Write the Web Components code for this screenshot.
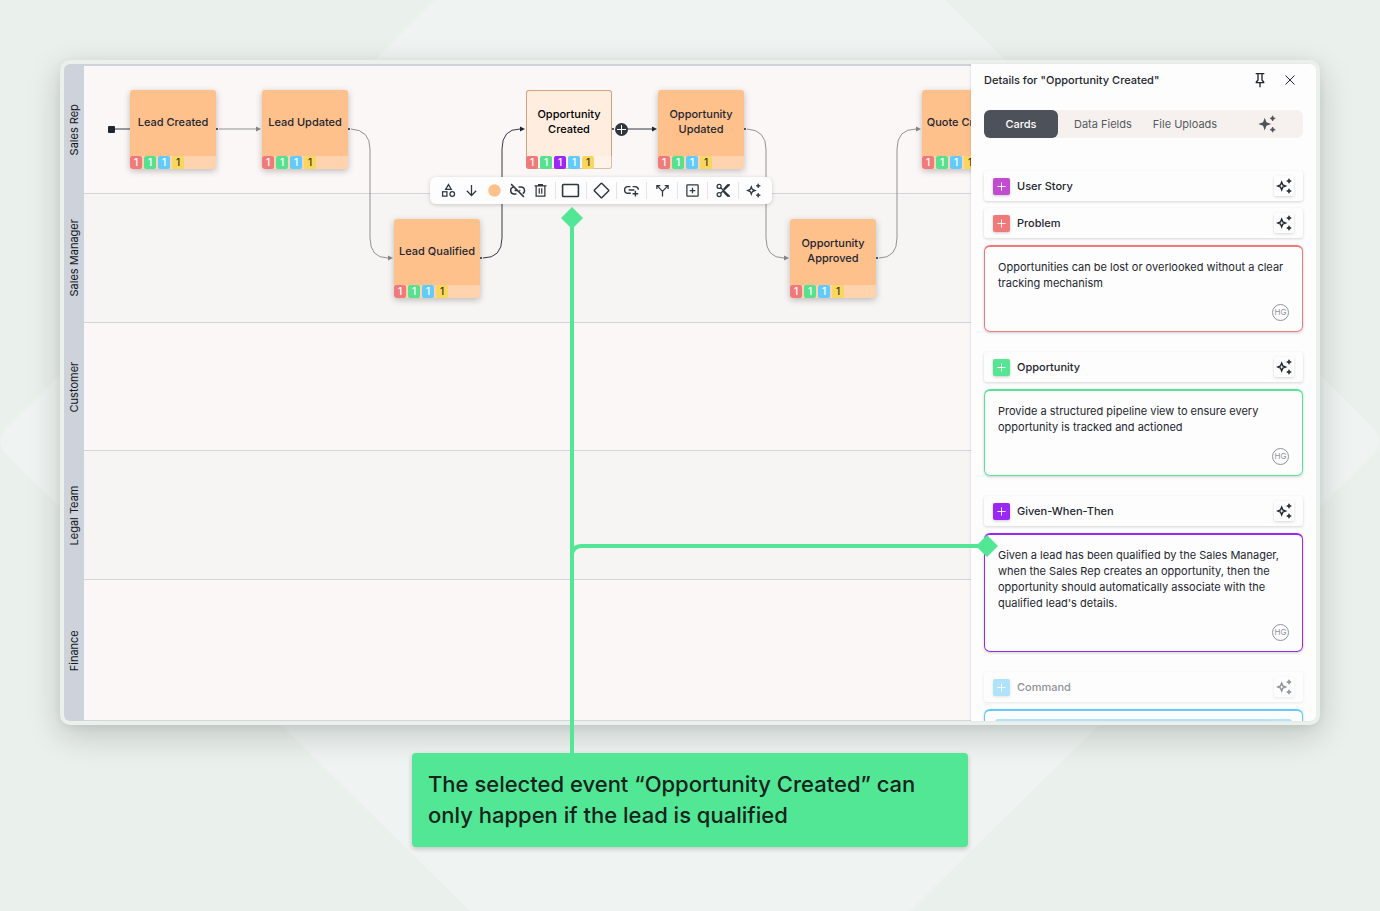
<!DOCTYPE html>
<html lang="en">
<head>
<meta charset="utf-8">
<meta name="viewport" content="width=device-width, initial-scale=1">
<title>Process map</title>
<style>
  body {
    margin: 0;
    font-family: Inter, "Liberation Sans", sans-serif;
    color: #1e2630;
  }
</style>
</head>
<body>
<map-stage>
  <process-board slot="board">
    <swim-lane name="Sales Rep"></swim-lane>
    <swim-lane name="Sales Manager" alt></swim-lane>
    <swim-lane name="Customer"></swim-lane>
    <swim-lane name="Legal Team" alt></swim-lane>
    <swim-lane name="Finance"></swim-lane>

    <flow-links slot="canvas"></flow-links>
    <event-node slot="canvas" col="0" row="0">Lead Created</event-node>
    <event-node slot="canvas" col="1" row="0">Lead Updated</event-node>
    <event-node slot="canvas" col="2" row="1">Lead Qualified</event-node>
    <event-node slot="canvas" col="3" row="0" selected>Opportunity Created</event-node>
    <event-node slot="canvas" col="4" row="0">Opportunity Updated</event-node>
    <event-node slot="canvas" col="5" row="1">Opportunity Approved</event-node>
    <event-node slot="canvas" col="6" row="0">Quote Created</event-node>
    <node-toolbar slot="canvas"></node-toolbar>

    <details-panel slot="panel" heading='Details for "Opportunity Created"'>
      <card-group name="User Story" color="#c24ccf"></card-group>
      <card-group name="Problem" color="#f07a7a">
        <note-card color="#f07a7a" author="HG">Opportunities can be lost or overlooked without a clear tracking mechanism</note-card>
      </card-group>
      <card-group name="Opportunity" color="#56e592">
        <note-card color="#56e592" author="HG">Provide a structured pipeline view to ensure every opportunity is tracked and actioned</note-card>
      </card-group>
      <card-group name="Given-When-Then" color="#9a27f3">
        <note-card color="#9a27f3" author="HG">Given a lead has been qualified by the Sales Manager, when the Sales Rep creates an opportunity, then the opportunity should automatically associate with the qualified lead's details.</note-card>
      </card-group>
      <card-group name="Command" color="#62cbfb" muted>
        <note-card color="#62cbfb" draft></note-card>
      </card-group>
    </details-panel>
  </process-board>
  <call-out slot="callout">The selected event “Opportunity Created” can only happen if the lead is qualified</call-out>
</map-stage>

<script>
const SPARKS = `
  <path d="M19.500 1l1 2.500 2.500 1-2.500 1-1 2.500-1-2.500-2.500-1 2.500-1z
    M19.500 16l1 2.500 2.500 1-2.500 1-1 2.500-1-2.500-2.500-1 2.500-1z" fill="currentColor" stroke-width="1"/>`;

const ICONS = {
  shapes: `<path d="M12 2.500l4.500 7.500h-9z"/><rect x="2.500" y="14" width="7" height="7"/><circle cx="18" cy="17.500" r="3.700"/>`,
  down: `<path d="M12 3v17M4.500 12.500L12 20l7.500-7.500"/>`,
  dot: `<circle cx="12" cy="12" r="10" fill="#ffc18c" stroke="none"/>`,
  unlink: `<path d="M6 7.200a5 5 0 0 0 1 9.800h3.500M13.500 7H17a5 5 0 0 1 2.500 9.300M8 12h4M14.500 12H16M3 3l18 18"/>`,
  trash: `<path d="M2.500 4.500h19M9 4.500V2.500h6v2M5 4.500V21h14V4.500M10 8.500v8.500M14 8.500v8.500"/>`,
  rect: `<rect x="2" y="4.500" width="20" height="15" rx="1"/>`,
  diamond: `<rect x="4.500" y="4.500" width="15" height="15" rx="1" transform="rotate(45 12 12)"/>`,
  linkadd: `<path d="M10.500 6.500H7a4.700 4.700 0 0 0 0 9.400h4M13.500 6.500H17a4.700 4.700 0 0 1 4.700 4.500M8 11.200h8M17.500 12.500v8M13.500 16.500h8"/>`,
  fork: `<path d="M12 21.500v-8L4 5M12 13.500L20 5M3 9.500V4h5.500M15.500 4H21v5.500"/>`,
  boxadd: `<rect x="3" y="3" width="18" height="18" rx="1"/><path d="M12 7.500v9M7.500 12h9"/>`,
  cut: `<circle cx="5" cy="5.500" r="3.200"/><circle cx="5" cy="18.500" r="3.200"/>
    <path d="M7.500 7.500L22 21.500M7.500 16.500L22 2.500"/><path d="M12 12l9.500 9.500h-3.500L11 14zM14 10.500l7.500-8H18L12 9z" fill="currentColor" stroke-width="1"/>`,
  sparkle: `<path d="M8.500 6l1.700 4.300 4.300 1.700-4.300 1.700L8.500 18l-1.700-4.300L2.500 12l4.300-1.700z"/>${SPARKS}`,
  sparkleFill: `<path d="M9 3.500l2.200 6.300 6.300 2.200-6.300 2.200L9 20.500l-2.200-6.300L.5 12l6.300-2.200z" fill="currentColor" stroke="none"/>${SPARKS}`,
  plus: `<path d="M12 3v18M3 12h18"/>`,
  pin: `<path d="M5.500 2.500h13M9 2.500V12l-2.500 3v1h11v-1L15 12V2.500M12 16v7"/>`,
  close: `<path d="M3 3l18 18M21 3L3 21"/>`
};

const icon = (name, size, stroke = 2) => `
  <svg width="${size}" height="${size}" viewBox="0 0 24 24" fill="none" stroke="currentColor"
    stroke-width="${stroke}" aria-hidden="true">${ICONS[name]}</svg>`;

const BUTTON_RESET = `
  button {
    margin: 0;
    padding: 0;
    border: none;
    background: none;
    color: inherit;
    font: inherit;
    cursor: pointer;
    display: flex;
    align-items: center;
    justify-content: center;
  }
  svg { display: block; }
`;

class MapStage extends HTMLElement {
  constructor() {
    super();
    this.attachShadow({ mode: "open" });
  }

  connectedCallback() {
    this.shadowRoot.innerHTML = /* html */`
      <style>
        :host {
          position: relative;
          box-sizing: border-box;
          height: 100vh;
          min-height: 600px;
          padding: 60px 60px 64px;
          display: flex;
          flex-direction: column;
          align-items: center;
          gap: 28px;
          overflow: hidden;
          background: #eaf0ec;
        }
        .backdrop, .pointer {
          position: absolute;
          top: 0;
          left: 0;
          width: 100%;
          height: 100%;
          pointer-events: none;
        }
        ::slotted(process-board) {
          position: relative;
          flex: 1 1 0;
          min-height: 0;
          align-self: stretch;
        }
        ::slotted(call-out) { position: relative; }
      </style>
      <svg class="backdrop" viewBox="0 0 1380 911" preserveAspectRatio="xMidYMid slice" aria-hidden="true">
        <path d="M435 0L8 427Q-7 442 8 456L470 911H910L1372 456Q1387 442 1372 427L945 0z" fill="#eff4f2"/>
      </svg>
      <slot name="board"></slot>
      <slot name="callout"></slot>
      <svg class="pointer" aria-hidden="true">
        <g fill="none" stroke="#52e795" stroke-width="4">
          <path d="M572 218V754"/>
          <path d="M572 556Q572 546 582 546H987"/>
        </g>
        <path d="M572 207l11 11-11 11-11-11zM987 535l11 11-11 11-11-11z" fill="#52e795" />
      </svg>
    `;
  }
}

class ProcessBoard extends HTMLElement {
  constructor() {
    super();
    this.attachShadow({ mode: "open" });
  }

  connectedCallback() {
    this.shadowRoot.innerHTML = /* html */`
      <style>
        :host {
          box-sizing: border-box;
          display: grid;
          grid-template-columns: 1fr 345px;
          grid-template-rows: minmax(0, 1fr);
          border: 4px solid #ebf0ed;
          border-radius: 10px;
          box-shadow: 0 10px 32px rgba(20, 30, 25, 0.2), 0 2px 8px rgba(20, 30, 25, 0.06);
          background: #ebf0ed;
        }
        .map {
          position: relative;
          display: grid;
          grid-template-rows: 10fr 10fr 10fr 10fr 11fr;
          padding-top: 2px;
          background: #ced2db;
          border-radius: 6px 0 0 6px;
          overflow: hidden;
        }
        .canvas {
          position: absolute;
          inset: 0 0 0 20px;
        }
      </style>
      <section class="map">
        <slot></slot>
        <div class="canvas"><slot name="canvas"></slot></div>
      </section>
      <slot name="panel"></slot>
    `;
  }
}

class SwimLane extends HTMLElement {
  constructor() {
    super();
    this.attachShadow({ mode: "open" });
  }

  connectedCallback() {
    this.shadowRoot.innerHTML = /* html */`
      <style>
        :host {
          display: grid;
          grid-template-columns: 20px 1fr;
          min-height: 0;
        }
        .name {
          writing-mode: vertical-rl;
          transform: rotate(180deg);
          text-align: center;
          font-size: 11px;
          line-height: 20px;
          color: #14181d;
        }
        .track {
          background: #fbf7f6;
          border-bottom: 1px solid #d2d5dc;
        }
        :host([alt]) .track { background: #f6f5f4; }
      </style>
      <div class="name">${this.getAttribute("name")}</div>
      <div class="track"></div>
    `;
  }
}

class FlowLinks extends HTMLElement {
  constructor() {
    super();
    this.attachShadow({ mode: "open" });
  }

  connectedCallback() {
    this.shadowRoot.innerHTML = /* html */`
      <style>
        :host {
          position: absolute;
          inset: 0;
        }
        svg {
          display: block;
          width: 100%;
          height: 100%;
        }
      </style>
      <svg aria-hidden="true">
        <defs>
          <marker id="soft" viewBox="0 0 5 6" refX="0" refY="3" markerWidth="5" markerHeight="6" markerUnits="userSpaceOnUse" orient="auto">
            <path d="M0 .5L5 3 0 5.500z" fill="#85868a"/>
          </marker>
          <marker id="dark" viewBox="0 0 5 6" refX="0" refY="3" markerWidth="5" markerHeight="6" markerUnits="userSpaceOnUse" orient="auto">
            <path d="M0 .5L5 3 0 5.500z" fill="#1e2630"/>
          </marker>
        </defs>
        <g fill="none" stroke="#919296">
          <path d="M135 65H172" marker-end="url(#soft)"/>
          <path d="M267 65Q286 66 286 85V174Q286 194 304 194" marker-end="url(#soft)"/>
          <path d="M663 65Q682 66 682 85V174Q682 194 700 194" marker-end="url(#soft)"/>
          <path d="M795 194Q813 194 813 174V85Q813 65 832 65" marker-end="url(#soft)"/>
        </g>
        <g fill="none" stroke="#333a44">
          <path d="M28 65H46"/>
          <path d="M399 194Q418 194 418 174V85Q418 65 436 65" marker-end="url(#dark)"/>
          <path d="M537 65H568" marker-end="url(#dark)"/>
        </g>
        <g fill="#1e2630">
          <rect x="24" y="62" width="7" height="7" rx="1"/>
          <circle cx="133" cy="65" r="1"/>
          <circle cx="265" cy="65" r="1"/>
          <circle cx="397" cy="194" r="1"/>
          <circle cx="529" cy="65" r="1"/>
          <circle cx="661" cy="65" r="1"/>
          <circle cx="793" cy="194" r="1"/>
          <circle cx="537.500" cy="65.500" r="6.500" fill="#30363e"/>
        </g>
        <path d="M533 65.500h9M537.500 61v9" stroke="#fff"/>
      </svg>
    `;
  }
}

class EventNode extends HTMLElement {
  constructor() {
    super();
    this.attachShadow({ mode: "open" });
  }

  connectedCallback() {
    const col = Number(this.getAttribute("col"));
    const row = Number(this.getAttribute("row"));
    this.style.left = `${46 + col * 132}px`;
    this.style.top = `${26 + row * 129}px`;
    const kinds = this.hasAttribute("selected")
      ? ["problem", "opportunity", "gwt", "command", "field"]
      : ["problem", "opportunity", "command", "field"];
    this.shadowRoot.innerHTML = /* html */`
      <style>
        :host {
          position: absolute;
          box-sizing: border-box;
          width: 86px;
          height: 79px;
          display: flex;
          flex-direction: column;
          background: #ffc18c;
          border-radius: 3px;
          overflow: hidden;
          box-shadow: 0 2px 6px rgba(60, 50, 45, 0.3);
        }
        :host([selected]) {
          background: #ffede0;
          box-shadow: inset 0 0 0 1px #cfa37e;
          color: #000;
        }
        .label {
          flex: 1;
          display: flex;
          align-items: center;
          justify-content: center;
          padding: 0 8px 2px;
          text-align: center;
          font-size: 11px;
          font-weight: 500;
          line-height: 15px;
          white-space: nowrap;
        }
        .label span {
          width: min-content;
          white-space: normal;
        }
        .label.short span { width: auto; white-space: nowrap; }
        .counts {
          display: flex;
          gap: 2px;
          background: rgba(255, 255, 255, 0.3);
        }
        .count {
          width: 12px;
          border-radius: 2px;
          color: #fff;
          font-size: 10px;
          font-weight: 500;
          line-height: 13px;
          text-align: center;
        }
        .problem { background: #f07a7a; }
        .opportunity { background: #56e08f; }
        .gwt { background: #9a27f3; }
        .command { background: #62cbfb; }
        .field { background: #f9d75e; color: #3a331c; }
      </style>
      <div class="label ${this.textContent.length < 15 ? "short" : ""}"><span><slot></slot></span></div>
      <div class="counts">${kinds.map(k => `<span class="count ${k}">1</span>`).join("")}</div>
    `;
  }
}

class NodeToolbar extends HTMLElement {
  constructor() {
    super();
    this.attachShadow({ mode: "open" });
  }

  connectedCallback() {
    const groups = [
      [["shapes", "Change shape"], ["down", "Move down"], ["dot", "Colour"], ["unlink", "Unlink", 17], ["trash", "Delete"]],
      [["rect", "Add event", 19]],
      [["diamond", "Add decision", 17]],
      [["linkadd", "Add link", 17]],
      [["fork", "Split path"]],
      [["boxadd", "Add note"]],
      [["cut", "Cut"]],
      [["sparkle", "Generate"]]
    ];
    const button = ([name, label, size = 15]) =>
      `<button type="button" aria-label="${label}">${icon(name, size)}</button>`;
    this.shadowRoot.innerHTML = /* html */`
      <style>
        ${BUTTON_RESET}
        :host {
          position: absolute;
          left: 346px;
          top: 113px;
          box-sizing: border-box;
          width: 342px;
          height: 27px;
          padding: 0 7px;
          display: flex;
          align-items: center;
          background: #fdfdfd;
          border-radius: 6px;
          box-shadow: 0 1px 4px rgba(0, 0, 0, 0.18);
          color: #30363e;
        }
        button {
          width: 23px;
          height: 23px;
        }
        .sep {
          flex: 1;
          display: flex;
          justify-content: center;
        }
        .sep::before {
          content: "";
          width: 1px;
          height: 17px;
          background: #e3e4e7;
        }
      </style>
      ${groups.map(g => g.map(button).join("")).join(`<span class="sep"></span>`)}
    `;
  }
}

class DetailsPanel extends HTMLElement {
  constructor() {
    super();
    this.attachShadow({ mode: "open" });
  }

  connectedCallback() {
    this.shadowRoot.innerHTML = /* html */`
      <style>
        ${BUTTON_RESET}
        :host {
          position: relative;
          min-height: 0;
          padding: 0 13px;
          overflow: hidden;
          background: #fdfdfd;
          border-radius: 0 6px 6px 0;
          box-shadow: -1px 0 2px rgba(0, 0, 0, 0.08);
        }
        header {
          display: flex;
          align-items: center;
          height: 32px;
          gap: 14px;
          padding-right: 5px;
        }
        h2 {
          flex: 1;
          margin: 0;
          font-size: 11px;
          font-weight: 500;
          line-height: 16px;
        }
        header button {
          width: 16px;
          height: 16px;
        }
        nav {
          display: flex;
          height: 28px;
          margin: 14px 0 33px;
          background: #f6f1ee;
          border-radius: 6px;
          font-size: 11px;
          color: #565a61;
        }
        nav button.active {
          width: 74px;
          margin-right: 16px;
          border-radius: 6px;
          background: #4d5159;
          color: #fff;
          font-weight: 500;
        }
        nav button { margin-right: 21px; }
        nav button.magic {
          width: 40px;
          margin: 0 16px 0 auto;
          color: #4d5159;
        }
      </style>
      <header>
        <h2>${this.getAttribute("heading")}</h2>
        <button type="button" aria-label="Pin">${icon("pin", 16)}</button>
        <button type="button" aria-label="Close">${icon("close", 12)}</button>
      </header>
      <nav>
        <button type="button" class="active">Cards</button>
        <button type="button">Data Fields</button>
        <button type="button">File Uploads</button>
        <button type="button" class="magic" aria-label="Generate">${icon("sparkleFill", 18)}</button>
      </nav>
      <slot></slot>
    `;
  }
}

class CardGroup extends HTMLElement {
  constructor() {
    super();
    this.attachShadow({ mode: "open" });
  }

  connectedCallback() {
    const name = this.getAttribute("name");
    this.shadowRoot.innerHTML = /* html */`
      <style>
        ${BUTTON_RESET}
        :host {
          display: block;
        }
        .head {
          box-sizing: border-box;
          display: flex;
          align-items: center;
          gap: 7px;
          height: 30px;
          margin-bottom: 7px;
          padding: 0 9px;
          border-radius: 3px;
          box-shadow: 0 1px 3px rgba(0, 0, 0, 0.16);
        }
        :host([muted]) .head { opacity: 0.5; }
        h3 {
          flex: 1;
          margin: 0;
          font-size: 11px;
          font-weight: 500;
          line-height: 16px;
        }
        .add {
          width: 17px;
          height: 17px;
          border-radius: 2px;
          background: ${this.getAttribute("color")};
          color: #fff;
          box-shadow: 0 1px 3px rgba(0, 0, 0, 0.2);
        }
        .magic {
          width: 20px;
          height: 20px;
          border-radius: 2px;
          box-shadow: 0 1px 3px rgba(0, 0, 0, 0.16);
        }
      </style>
      <div class="head">
        <button type="button" class="add" aria-label="Add ${name}">${icon("plus", 11)}</button>
        <h3>${name}</h3>
        <button type="button" class="magic" aria-label="Generate ${name}">${icon("sparkle", 16)}</button>
      </div>
      <slot></slot>
    `;
  }
}

class NoteCard extends HTMLElement {
  constructor() {
    super();
    this.attachShadow({ mode: "open" });
  }

  connectedCallback() {
    const color = this.getAttribute("color");
    const author = this.getAttribute("author");
    this.shadowRoot.innerHTML = /* html */`
      <style>
        :host {
          box-sizing: border-box;
          display: flex;
          flex-direction: column;
          min-height: 87px;
          margin-bottom: 20px;
          padding: 12px 13px 10px;
          border: 1px solid ${color};
          border-top-width: 2px;
          border-radius: 6px;
          box-shadow: 0 1px 3px rgba(0, 0, 0, 0.18);
          font-size: 11px;
          line-height: 16px;
        }
        :host([draft]) { padding: 8px 10px; }
        .author {
          box-sizing: border-box;
          align-self: flex-end;
          width: 17px;
          height: 17px;
          margin-top: 13px;
          border: 1px solid #8f949c;
          border-radius: 50%;
          color: #8f949c;
          font-size: 8px;
          line-height: 15px;
          text-align: center;
        }
        .draft {
          height: 30px;
          border-top: 2px solid ${color};
          border-radius: 3px;
          opacity: 0.5;
        }
      </style>
      ${this.hasAttribute("draft")
        ? `<div class="draft"></div>`
        : `<div><slot></slot></div><div class="author">${author}</div>`}
    `;
  }
}

class CallOut extends HTMLElement {
  constructor() {
    super();
    this.attachShadow({ mode: "open" });
  }

  connectedCallback() {
    this.shadowRoot.innerHTML = /* html */`
      <style>
        :host {
          box-sizing: border-box;
          width: 100%;
          max-width: 556px;
          padding: 16px;
          border-radius: 4px;
          background: #52e795;
          box-shadow: 0 2px 5px rgba(0, 0, 0, 0.2);
          color: #15241c;
          font-size: 22px;
          font-weight: 500;
          line-height: 31px;
        }
      </style>
      <slot></slot>
    `;
  }
}

customElements.define("map-stage", MapStage);
customElements.define("process-board", ProcessBoard);
customElements.define("swim-lane", SwimLane);
customElements.define("flow-links", FlowLinks);
customElements.define("event-node", EventNode);
customElements.define("node-toolbar", NodeToolbar);
customElements.define("details-panel", DetailsPanel);
customElements.define("card-group", CardGroup);
customElements.define("note-card", NoteCard);
customElements.define("call-out", CallOut);
</script>
</body>
</html>
